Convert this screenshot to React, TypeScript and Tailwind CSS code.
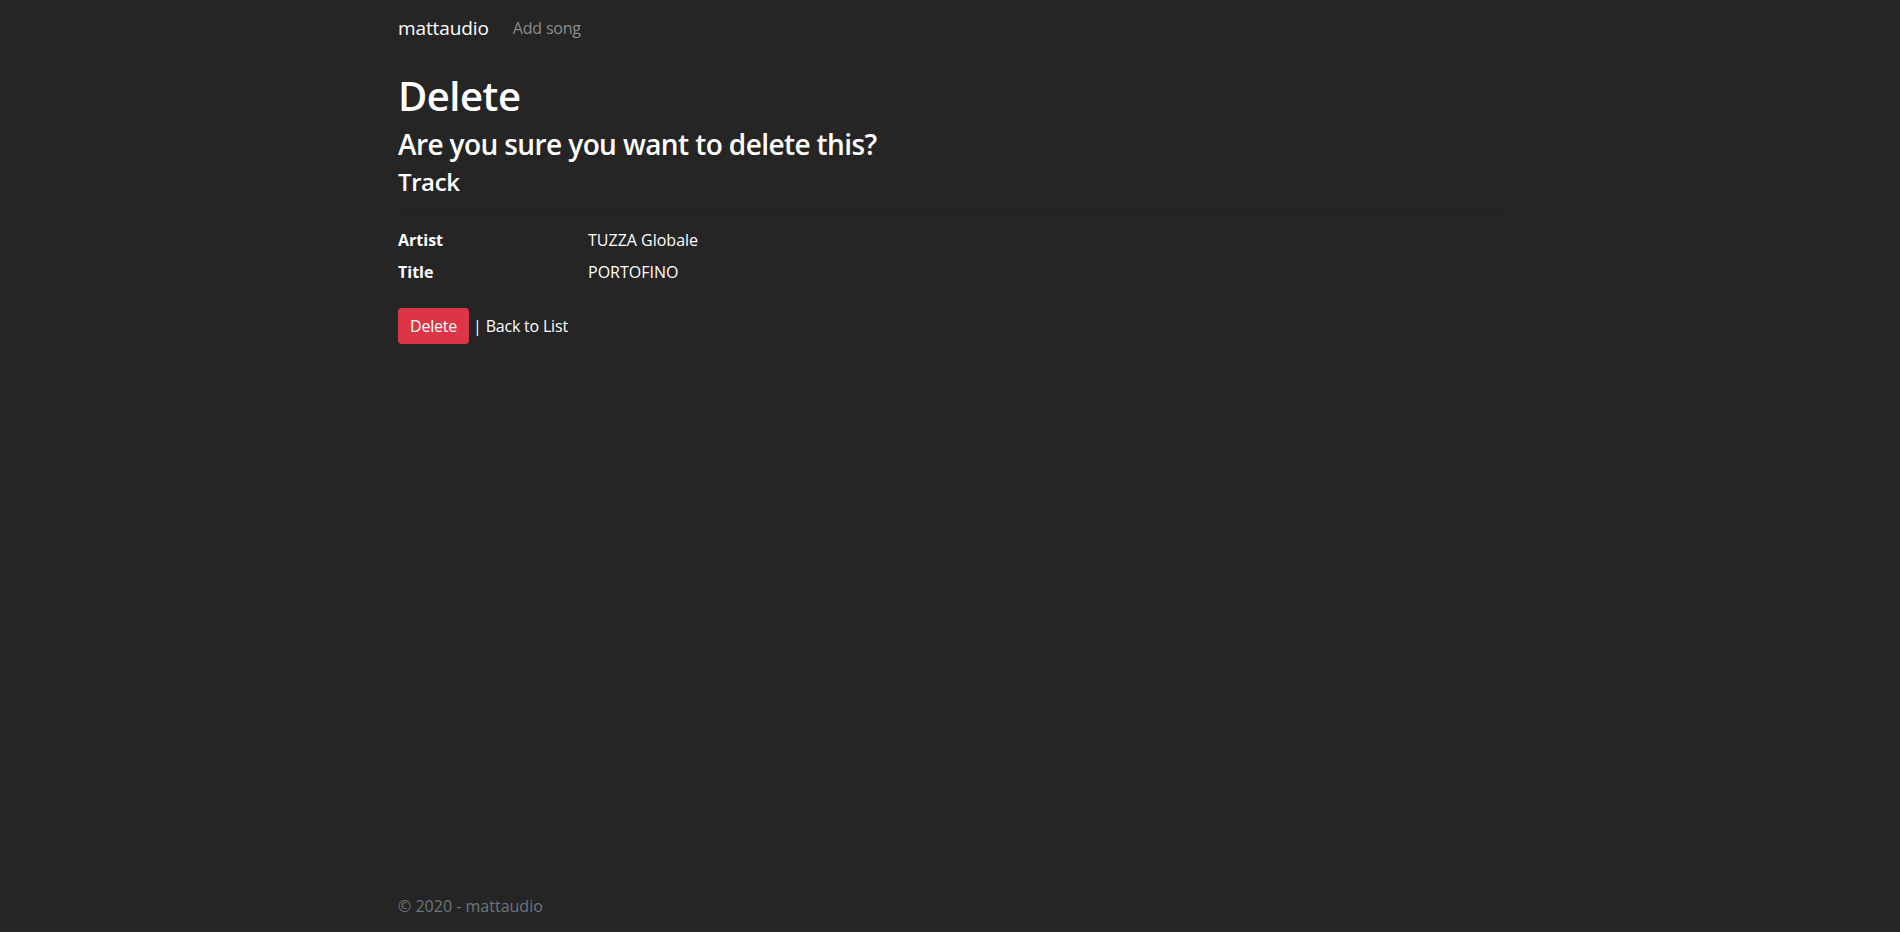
export default function App() {
  return (
    <div className="min-h-screen flex flex-col bg-[#252525] text-white font-['Open_Sans',sans-serif]">
      <header className="mb-4">
        <nav className="w-[1140px] mx-auto px-[18px] h-14 flex items-center">
          <a href="#" className="text-[19px] leading-[30px] tracking-[-0.1px] text-white mr-5">
            mattaudio
          </a>
          <a href="#" className="text-[16px] leading-6 tracking-[-0.2px] text-[#8c8c8c] px-1">
            Add song
          </a>
        </nav>
      </header>

      <main className="w-[1140px] mx-auto px-[18px]">
        <h1 className="text-[40px] leading-[48px] font-semibold tracking-[-0.5px] mb-2">Delete</h1>
        <h3 className="text-[28px] leading-[33px] font-semibold tracking-[-0.6px] mb-[6px]">
          Are you sure you want to delete this?
        </h3>
        <div>
          <h4 className="text-[24px] leading-[29px] font-semibold tracking-[-0.4px]">Track</h4>
          <hr className="mt-[15px] mb-4 border-t border-[#202020]" />
          <dl className="grid grid-cols-[190px_1fr] text-[16px] leading-6 mb-4">
            <dt className="font-bold mb-2">Artist</dt>
            <dd className="mb-2">TUZZA Globale</dd>
            <dt className="font-bold mb-2">Title</dt>
            <dd className="mb-2">PORTOFINO</dd>
          </dl>
          <form className="text-[16px] leading-6 tracking-[-0.2px]">
            <button
              type="button"
              className="bg-[#dc3545] text-white rounded px-3 py-[6px] leading-6"
            >
              Delete
            </button>{" "}
            | <a href="#" className="text-white">Back to List</a>
          </form>
        </div>
      </main>

      <footer className="mt-auto h-[60px] pt-2 leading-[52px] text-[16px] text-[#6c757d]">
        <div className="w-[1140px] mx-auto px-[18px]">© 2020 - mattaudio</div>
      </footer>
    </div>
  );
}
